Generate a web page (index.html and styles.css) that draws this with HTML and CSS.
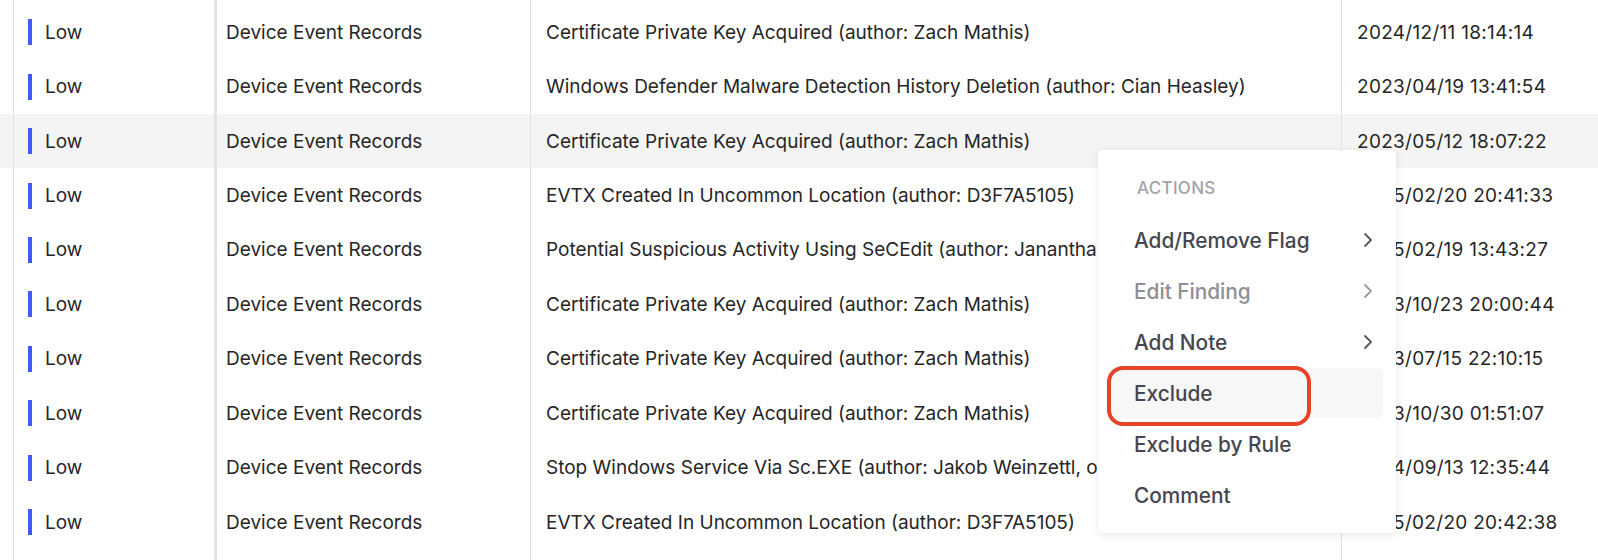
FILE: index.html
```html
<!DOCTYPE html>
<html lang="en">
<head>
<meta charset="utf-8">
<title>Findings</title>
<link rel="stylesheet" href="styles.css">
</head>
<body>
<div class="page">
  <div class="table">
    <div class="row row-partial" aria-hidden="true">
      <div class="cell cell-gap"></div>
      <div class="cell cell-sev"></div>
      <div class="cell cell-src"></div>
      <div class="cell cell-title"></div>
      <div class="cell cell-date"></div>
    </div>
    <div class="row">
      <div class="cell cell-gap"></div>
      <div class="cell cell-sev"><span class="sev-bar"></span><span>Low</span></div>
      <div class="cell cell-src">Device Event Records</div>
      <div class="cell cell-title">Certificate Private Key Acquired (author: Zach Mathis)</div>
      <div class="cell cell-date">2024/12/11 18:14:14</div>
    </div>
    <div class="row">
      <div class="cell cell-gap"></div>
      <div class="cell cell-sev"><span class="sev-bar"></span><span>Low</span></div>
      <div class="cell cell-src">Device Event Records</div>
      <div class="cell cell-title">Windows Defender Malware Detection History Deletion (author: Cian Heasley)</div>
      <div class="cell cell-date">2023/04/19 13:41:54</div>
    </div>
    <div class="row row-active">
      <div class="cell cell-gap"></div>
      <div class="cell cell-sev"><span class="sev-bar"></span><span>Low</span></div>
      <div class="cell cell-src">Device Event Records</div>
      <div class="cell cell-title">Certificate Private Key Acquired (author: Zach Mathis)</div>
      <div class="cell cell-date">2023/05/12 18:07:22</div>
    </div>
    <div class="row">
      <div class="cell cell-gap"></div>
      <div class="cell cell-sev"><span class="sev-bar"></span><span>Low</span></div>
      <div class="cell cell-src">Device Event Records</div>
      <div class="cell cell-title">EVTX Created In Uncommon Location (author: D3F7A5105)</div>
      <div class="cell cell-date">2025/02/20 20:41:33</div>
    </div>
    <div class="row">
      <div class="cell cell-gap"></div>
      <div class="cell cell-sev"><span class="sev-bar"></span><span>Low</span></div>
      <div class="cell cell-src">Device Event Records</div>
      <div class="cell cell-title">Potential Suspicious Activity Using SeCEdit (author: Janantha Marasinghe)</div>
      <div class="cell cell-date">2025/02/19 13:43:27</div>
    </div>
    <div class="row">
      <div class="cell cell-gap"></div>
      <div class="cell cell-sev"><span class="sev-bar"></span><span>Low</span></div>
      <div class="cell cell-src">Device Event Records</div>
      <div class="cell cell-title">Certificate Private Key Acquired (author: Zach Mathis)</div>
      <div class="cell cell-date">2023/10/23 20:00:44</div>
    </div>
    <div class="row">
      <div class="cell cell-gap"></div>
      <div class="cell cell-sev"><span class="sev-bar"></span><span>Low</span></div>
      <div class="cell cell-src">Device Event Records</div>
      <div class="cell cell-title">Certificate Private Key Acquired (author: Zach Mathis)</div>
      <div class="cell cell-date">2023/07/15 22:10:15</div>
    </div>
    <div class="row">
      <div class="cell cell-gap"></div>
      <div class="cell cell-sev"><span class="sev-bar"></span><span>Low</span></div>
      <div class="cell cell-src">Device Event Records</div>
      <div class="cell cell-title">Certificate Private Key Acquired (author: Zach Mathis)</div>
      <div class="cell cell-date">2023/10/30 01:51:07</div>
    </div>
    <div class="row">
      <div class="cell cell-gap"></div>
      <div class="cell cell-sev"><span class="sev-bar"></span><span>Low</span></div>
      <div class="cell cell-src">Device Event Records</div>
      <div class="cell cell-title">Stop Windows Service Via Sc.EXE (author: Jakob Weinzettl, oscd.community)</div>
      <div class="cell cell-date">2024/09/13 12:35:44</div>
    </div>
    <div class="row">
      <div class="cell cell-gap"></div>
      <div class="cell cell-sev"><span class="sev-bar"></span><span>Low</span></div>
      <div class="cell cell-src">Device Event Records</div>
      <div class="cell cell-title">EVTX Created In Uncommon Location (author: D3F7A5105)</div>
      <div class="cell cell-date">2025/02/20 20:42:38</div>
    </div>
    <div class="row" aria-hidden="true">
      <div class="cell cell-gap"></div>
      <div class="cell cell-sev"></div>
      <div class="cell cell-src"></div>
      <div class="cell cell-title"></div>
      <div class="cell cell-date"></div>
    </div>
  </div>

  <div class="menu">
    <div class="menu-header">ACTIONS</div>
    <div class="menu-item">
      <span>Add/Remove Flag</span>
      <svg class="chev" width="10" height="16" viewBox="0 0 10 16"><polyline points="2,2 8,8 2,14" fill="none" stroke="currentColor" stroke-width="1.8" stroke-linecap="round" stroke-linejoin="round"/></svg>
    </div>
    <div class="menu-item menu-item-disabled">
      <span>Edit Finding</span>
      <svg class="chev" width="10" height="16" viewBox="0 0 10 16"><polyline points="2,2 8,8 2,14" fill="none" stroke="currentColor" stroke-width="1.8" stroke-linecap="round" stroke-linejoin="round"/></svg>
    </div>
    <div class="menu-item">
      <span>Add Note</span>
      <svg class="chev" width="10" height="16" viewBox="0 0 10 16"><polyline points="2,2 8,8 2,14" fill="none" stroke="currentColor" stroke-width="1.8" stroke-linecap="round" stroke-linejoin="round"/></svg>
    </div>
    <div class="menu-item menu-item-hover">
      <span>Exclude</span>
    </div>
    <div class="menu-item">
      <span>Exclude by Rule</span>
    </div>
    <div class="menu-item">
      <span>Comment</span>
    </div>
    <div class="highlight-ring"></div>
  </div>
</div>
</body>
</html>
```

FILE: styles.css
```css
* { box-sizing: border-box; }

html, body {
  margin: 0;
  padding: 0;
  background: #ffffff;
  overflow: hidden;
}

body {
  font-family: Inter, "Liberation Sans", sans-serif;
  color: #262626;
}

.page {
  position: relative;
  width: 1598px;
  height: 560px;
  overflow: hidden;
}

.table {
  display: flex;
  flex-direction: column;
  padding-top: 5px;
}

.row {
  display: grid;
  grid-template-columns: 14px 203px 314px 811px 256px;
  height: 54.44px;
  flex: none;
  font-size: 19px;
}

.row-partial {
  margin-top: -54.44px;
}

.row-active {
  background: #f4f4f4;
}

.cell {
  display: flex;
  align-items: center;
  white-space: nowrap;
  overflow: hidden;
}

.cell-gap {
  border-right: 1px solid #e2e2e2;
}

.cell-sev {
  padding-left: 14px;
  gap: 13px;
  border-right: 3px solid #e3e3e3;
}

.sev-bar {
  width: 4px;
  height: 26px;
  background: #3d5cfb;
  flex: none;
}

.cell-src {
  padding-left: 9px;
  border-right: 1px solid #e2e2e2;
}

.cell-title {
  padding-left: 15px;
  border-right: 1px solid #e2e2e2;
}

.cell-date {
  padding-left: 15px;
  letter-spacing: 0.3px;
}

/* Context menu overlay */
.menu {
  position: absolute;
  left: 1098px;
  top: 150px;
  width: 298px;
  height: 383px;
  background: #ffffff;
  border-radius: 4px;
  box-shadow: 0 2px 10px rgba(0, 0, 0, 0.09), 0 0 1px rgba(0, 0, 0, 0.06);
  display: flex;
  flex-direction: column;
  gap: 1px;
}

.menu-header {
  padding: 28px 0 16px 39px;
  font-size: 17px;
  line-height: 20px;
  font-weight: 500;
  color: #a3a3a8;
  letter-spacing: 0.3px;
}

.menu-item {
  height: 50px;
  margin: 0 13px 0 10px;
  padding: 0 10px 0 26px;
  display: flex;
  align-items: center;
  justify-content: space-between;
  font-size: 20.8px;
  font-weight: 500;
  color: #45464f;
  border-radius: 6px;
}

.menu-item-disabled {
  color: #8e8e94;
}

.menu-item-hover {
  background: #f7f7f7;
}

.chev {
  flex: none;
  color: #55565e;
}

.menu-item-disabled .chev {
  color: #9a9aa0;
}

.highlight-ring {
  position: absolute;
  left: 9px;
  top: 216px;
  width: 204px;
  height: 60px;
  border: 4px solid #e5442b;
  border-radius: 16px;
}
```
